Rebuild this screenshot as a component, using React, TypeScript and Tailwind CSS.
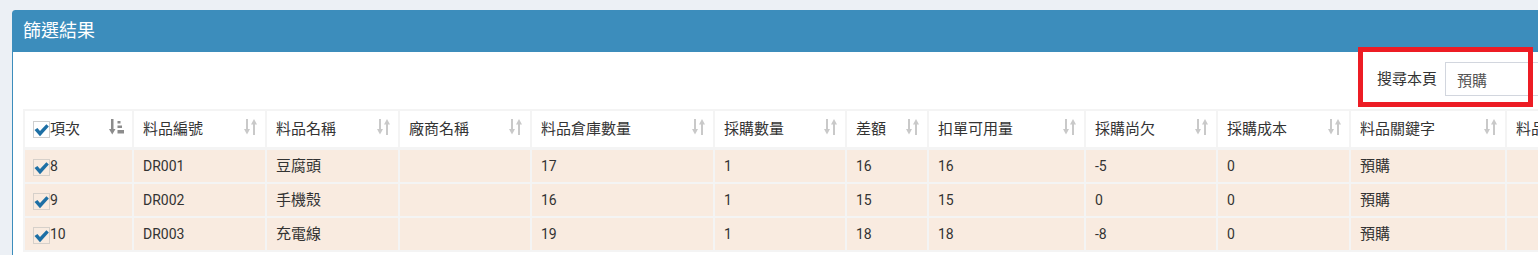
const columns = [
  { title: "項次", width: "w-[109px]" },
  { title: "料品編號", width: "w-[133px]" },
  { title: "料品名稱", width: "w-[133px]" },
  { title: "廠商名稱", width: "w-[132px]" },
  { title: "料品倉庫數量", width: "w-[183px]" },
  { title: "採購數量", width: "w-[132px]" },
  { title: "差額", width: "w-[82px]" },
  { title: "扣單可用量", width: "w-[157px]" },
  { title: "採購尚欠", width: "w-[132px]" },
  { title: "採購成本", width: "w-[133px]" },
  { title: "料品關鍵字", width: "w-[156px]" },
  { title: "料品類別", width: "w-[130px]" },
];

const rows = [
  ["8", "DR001", "豆腐頭", "", "17", "1", "16", "16", "-5", "0", "預購", ""],
  ["9", "DR002", "手機殼", "", "16", "1", "15", "15", "0", "0", "預購", ""],
  ["10", "DR003", "充電線", "", "19", "1", "18", "18", "-8", "0", "預購", ""],
];

const isCJK = (s: string) => /[\u4e00-\u9fff]/.test(s);

const CheckBox = ({ bg }: { bg: string }) => {
  return (
    <span
      className={
        bg === "white"
          ? "w-[17px] h-[17px] border border-[#cfcfcf] bg-white shrink-0"
          : "w-[17px] h-[17px] border border-[#d6d0ca] shrink-0 mt-[3px]"
      }
    >
      <svg width="15" height="15" viewBox="0 0 15 15">
        <polygon
          points="0.5,8 3.4,6 6,9 12.4,2.2 14.8,4.6 6,14.2"
          fill="#1d6fa5"
        />
      </svg>
    </span>
  );
};

const SortIcon = () => (
  <svg width="14" height="16" viewBox="0 0 14 16">
    <g fill="#c9c9c9">
      <rect x="2" y="0" width="2" height="11" />
      <polygon points="0,10 6,10 3,15.5" />
      <polygon points="7,5.5 13,5.5 10,0" />
      <rect x="9" y="5" width="2" height="11" />
    </g>
  </svg>
);

const SortedIcon = () => (
  <svg width="16" height="16" viewBox="0 0 16 16">
    <g fill="#8c8c8c">
      <rect x="2" y="0" width="2.5" height="11" />
      <polygon points="0,10 6.5,10 3.25,15.5" />
      <rect x="8.5" y="2" width="3" height="2.5" />
      <rect x="8.5" y="6.5" width="4.5" height="2.5" />
      <rect x="8.5" y="11" width="6.5" height="3.5" />
    </g>
  </svg>
);

const App = () => {
  return (
    <div className="relative w-[1538px] h-[255px] overflow-hidden bg-[#ecf0f5] pt-[10px] pl-[12px] font-[family-name:Roboto,'Noto_Sans_CJK_TC',sans-serif] text-[#333]">
      <div className="w-[1636px] bg-white border border-[#3c8dbc] rounded-t-[3px]">
        <div className="h-[41px] bg-[#3c8dbc] flex items-center pl-[10px] pb-[2px] text-white text-[18px] leading-[18px]">
          篩選結果
        </div>

        <div className="p-[10px]">
          <div className="w-[1614px] h-[34px] mb-[13px] flex justify-end items-center">
            <span className="text-[15px] mr-[8px]">搜尋本頁</span>
            <input
              readOnly
              value="預購"
              className="w-[192px] h-[34px] border border-[#d2d6de] px-[11px] text-[15px] text-[#555] outline-none"
            />
          </div>

          <table className="table-fixed border-separate border-spacing-0 border-l-2 border-t-2 border-[#f4f4f4] w-[1614px]">
            <thead>
              <tr>
                {columns.map((col, i) => (
                  <th
                    key={col.title}
                    className={`${col.width} relative text-left font-normal bg-white border-r-2 border-b-[3px] border-[#f4f4f4] py-[8px] pr-[24px] leading-[20px] text-[15px] whitespace-nowrap ${
                      i === 0 ? "pl-[8px]" : "pl-[9px]"
                    }`}
                  >
                    {i === 0 ? (
                      <div className="flex items-center">
                        <CheckBox bg="white" />
                        <span>{col.title}</span>
                      </div>
                    ) : (
                      col.title
                    )}
                    <span className="absolute right-[7px] top-[8px]">
                      {i === 0 ? <SortedIcon /> : <SortIcon />}
                    </span>
                  </th>
                ))}
              </tr>
            </thead>
            <tbody>
              {rows.map((row) => (
                <tr key={row[0]}>
                  {row.map((cell, i) => (
                    <td
                      key={i}
                      className={`bg-[#f9ebe0] border-r-2 border-b-2 border-[#f4f4f4] py-[6px] leading-[19px] whitespace-nowrap ${
                        i === 0 ? "pl-[8px]" : "pl-[9px]"
                      } ${isCJK(cell) ? "text-[15px]" : "text-[14px]"}`}
                    >
                      {i === 0 ? (
                        <div className="flex items-center">
                          <CheckBox bg="row" />
                          <span>{cell}</span>
                        </div>
                      ) : (
                        cell
                      )}
                    </td>
                  ))}
                </tr>
              ))}
            </tbody>
          </table>
        </div>
      </div>

      {/* annotation box over the search field */}
      <div className="absolute left-[1358px] top-[47px] w-[175px] h-[60px] border-[5px] border-[#ed1c24]" />
    </div>
  );
};

export default App;
